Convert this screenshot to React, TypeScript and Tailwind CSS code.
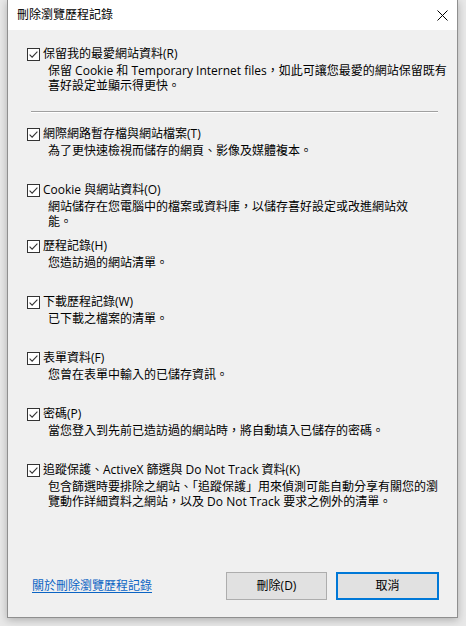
const rows: { label: string; desc: string[] }[] = [
  { label: "網際網路暫存檔與網站檔案(T)", desc: ["為了更快速檢視而儲存的網頁、影像及媒體複本。"] },
  {
    label: "Cookie 與網站資料(O)",
    desc: ["網站儲存在您電腦中的檔案或資料庫，以儲存喜好設定或改進網站效", "能。"],
  },
  { label: "歷程記錄(H)", desc: ["您造訪過的網站清單。"] },
  { label: "下載歷程記錄(W)", desc: ["已下載之檔案的清單。"] },
  { label: "表單資料(F)", desc: ["您曾在表單中輸入的已儲存資訊。"] },
  { label: "密碼(P)", desc: ["當您登入到先前已造訪過的網站時，將自動填入已儲存的密碼。"] },
  {
    label: "追蹤保護、ActiveX 篩選與 Do Not Track 資料(K)",
    desc: [
      "包含篩選時要排除之網站、「追蹤保護」用來偵測可能自動分享有關您的瀏",
      "覽動作詳細資料之網站，以及 Do Not Track 要求之例外的清單。",
    ],
  },
];

const CheckBox = () => (
  <svg width="13" height="13" viewBox="0 0 13 13" className="shrink-0">
    <rect x="0.5" y="0.5" width="12" height="12" fill="#fff" stroke="#333" />
    <path d="M2.6 6.6 L5.1 9.1 L10.4 3.6" fill="none" stroke="#333" strokeWidth="1.1" />
  </svg>
);

const Option = ({ label, desc }: { label: string; desc: string[] }) => (
  <div className="flex flex-col">
    <div className="flex items-center gap-[3px] h-4 leading-4">
      <CheckBox />
      <span className="whitespace-nowrap">{label}</span>
    </div>
    <div className="mt-[2px] pl-[21px] leading-[14.5px] whitespace-nowrap">
      {desc.map((line, i) => (
        <div key={i}>{line}</div>
      ))}
    </div>
  </div>
);

export default function App() {
  return (
    <div className="w-[466px] h-[626px] overflow-hidden bg-[#e8e8e8] pl-[7px] text-[12px] text-black font-['Open_Sans','Noto_Sans_CJK_TC',sans-serif]">
      <div className="w-[451px] h-[618px] flex flex-col border-x border-b border-[#8f8f8f] bg-[#f0f0f0] shadow-[0_2px_8px_rgba(0,0,0,0.25)]">
        {/* title bar */}
        <div className="h-[30px] shrink-0 bg-white flex items-center justify-between pl-[9px] pr-[9px]">
          <span className="leading-4">刪除瀏覽歷程記錄</span>
          <svg width="11" height="11" viewBox="0 0 11 11">
            <path d="M0.5 0.5 L10.5 10.5 M10.5 0.5 L0.5 10.5" stroke="#000" strokeWidth="1" />
          </svg>
        </div>

        {/* body */}
        <div className="flex-1 flex flex-col pt-4 pl-[19px]">
          <Option
            label="保留我的最愛網站資料(R)"
            desc={[
              "保留 Cookie 和 Temporary Internet files，如此可讓您最愛的網站保留既有",
              "喜好設定並顯示得更快。",
            ]}
          />
          <div className="mt-[18px] ml-[4px] w-[407px] h-px bg-[#a0a0a0] shadow-[0_1px_0_#ffffff]"></div>
          <div className="mt-[14px] flex flex-col">
            {rows.map((r) => (
              <div key={r.label} className="h-[56px]">
                <Option label={r.label} desc={r.desc} />
              </div>
            ))}
          </div>

          <div className="mt-auto flex items-center pb-[17px] pr-[18px]">
            <a href="#" className="ml-[5px] text-[#0b64c4] underline underline-offset-2 leading-4">
              關於刪除瀏覽歷程記錄
            </a>
            <button className="ml-auto w-[101px] h-[28px] bg-[#e1e1e1] border border-[#adadad] leading-4">
              刪除(D)
            </button>
            <button className="ml-[9px] w-[103px] h-[28px] bg-[#e1e1e1] border-2 border-[#0078d7] leading-4">
              取消
            </button>
          </div>
        </div>
      </div>
    </div>
  );
}
